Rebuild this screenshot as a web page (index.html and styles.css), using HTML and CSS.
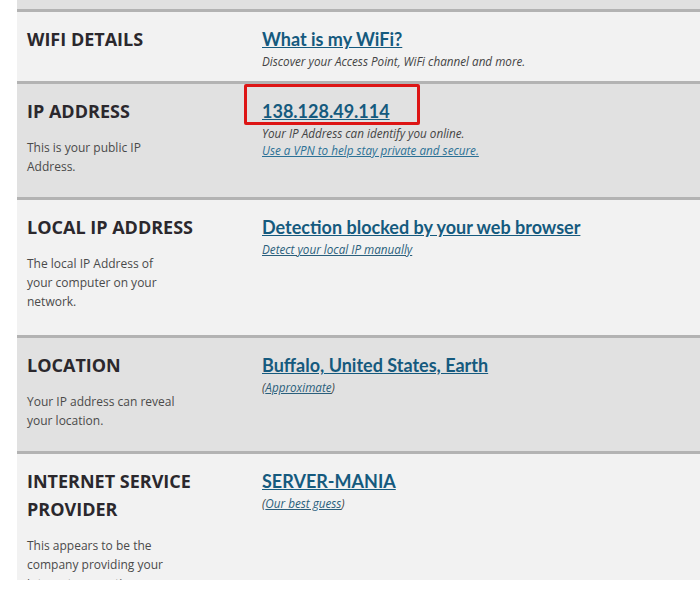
FILE: index.html
```html
<!DOCTYPE html>
<html lang="en">
<head>
  <meta charset="UTF-8">
  <meta name="viewport" content="width=device-width, initial-scale=1.0">
  <title>What Is My IP Address</title>
  <link rel="stylesheet" href="styles.css">
</head>
<body>
  <div class="sheet">
    <div class="stub"></div>

    <div class="row">
      <div class="label">
        <h2>WIFI DETAILS</h2>
      </div>
      <div class="value">
        <a class="main-link" href="#">What is my WiFi?</a>
        <div class="note">Discover your Access Point, WiFi channel and more.</div>
      </div>
    </div>

    <div class="row alt">
      <div class="label">
        <h2>IP ADDRESS</h2>
        <p>This is your public IP Address.</p>
      </div>
      <div class="value">
        <div class="marked">
          <a class="main-link" href="#">138.128.49.114</a>
          <span class="callout"></span>
        </div>
        <div class="note">Your IP Address can identify you online.</div>
        <div class="note"><a class="vpn" href="#">Use a VPN to help stay private and secure.</a></div>
      </div>
    </div>

    <div class="row tall">
      <div class="label">
        <h2>LOCAL IP ADDRESS</h2>
        <p>The local IP Address of your computer on your network.</p>
      </div>
      <div class="value">
        <a class="main-link" href="#">Detection blocked by your web browser</a>
        <div class="note"><a href="#">Detect your local IP manually</a></div>
      </div>
    </div>

    <div class="row alt">
      <div class="label">
        <h2>LOCATION</h2>
        <p>Your IP address can reveal your location.</p>
      </div>
      <div class="value">
        <a class="main-link" href="#">Buffalo, United States, Earth</a>
        <div class="note">(<a href="#">Approximate</a>)</div>
      </div>
    </div>

    <div class="row">
      <div class="label">
        <h2>INTERNET SERVICE PROVIDER</h2>
        <p>This appears to be the company providing your internet connection.</p>
      </div>
      <div class="value">
        <a class="main-link" href="#">SERVER-MANIA</a>
        <div class="note">(<a href="#">Our best guess</a>)</div>
      </div>
    </div>
  </div>
</body>
</html>
```

FILE: styles.css
```css
body {
  margin: 0;
  background: #ffffff;
  font-family: "Open Sans", "Noto Sans", sans-serif;
  color: #444444;
}
.sheet {
  margin-left: 17px;
  height: 580px;
  overflow: hidden;
  background: #f2f2f2;
}
.stub {
  height: 9px;
  background: #e1e1e1;
}
.row {
  display: grid;
  grid-template-columns: 235px 1fr;
  padding: 13px 10px 11px;
  border-top: 3px solid #b3b3b3;
  background: #f2f2f2;
}
.row.alt {
  background: #e1e1e1;
}
.row.tall {
  padding-bottom: 14px;
}
.label h2 {
  margin: 0;
  font-size: 18px;
  line-height: 28px;
  font-weight: 700;
  color: #2b282d;
}
.label p {
  margin: 13px 0 10px;
  width: 152px;
  font-size: 12px;
  line-height: 19px;
  color: #4a4a4a;
}
.main-link {
  display: inline-block;
  font-family: Lato, "Open Sans", sans-serif;
  font-size: 18px;
  line-height: 28px;
  font-weight: 700;
  color: #155a7e;
  text-decoration: underline;
}
.note {
  font-size: 11.7px;
  line-height: 17px;
  font-style: italic;
  color: #444444;
}
.note a {
  color: #2a5f7c;
}
.note a.vpn {
  color: #2c7196;
}
.marked {
  position: relative;
}
.callout {
  position: absolute;
  left: -18px;
  top: -13px;
  width: 170px;
  height: 35px;
  border: 3px solid #dd1515;
  border-radius: 2px;
}
```
